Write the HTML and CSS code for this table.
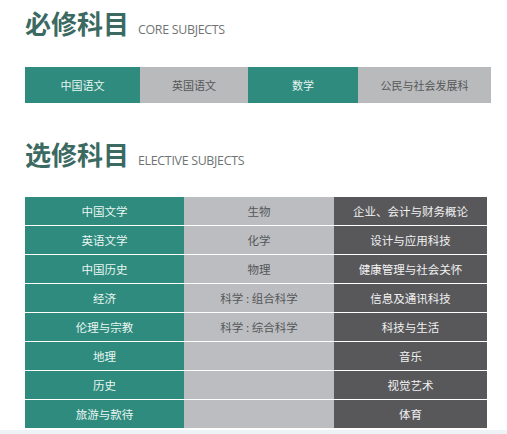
FILE: index.html
```html
<!DOCTYPE html>
<html lang="zh">
<head>
<meta charset="utf-8">
<title>科目</title>
<link rel="stylesheet" href="styles.css">
</head>
<body>
<div class="page">
  <div class="title title-core">
    <span class="zh">必修科目</span><span class="en">CORE SUBJECTS</span>
  </div>
  <div class="core-bar">
    <div class="cell teal c1">中国语文</div>
    <div class="cell gray c2">英国语文</div>
    <div class="cell teal c3">数学</div>
    <div class="cell gray c4">公民与社会发展科</div>
  </div>
  <div class="title title-elective">
    <span class="zh">选修科目</span><span class="en">ELECTIVE SUBJECTS</span>
  </div>
  <div class="grid">
    <div class="cell teal">中国文学</div><div class="cell light">生物</div><div class="cell dark">企业、会计与财务概论</div>
    <div class="cell teal">英语文学</div><div class="cell light">化学</div><div class="cell dark">设计与应用科技</div>
    <div class="cell teal">中国历史</div><div class="cell light">物理</div><div class="cell dark">健康管理与社会关怀</div>
    <div class="cell teal">经济</div><div class="cell light">科学 : 组合科学</div><div class="cell dark">信息及通讯科技</div>
    <div class="cell teal">伦理与宗教</div><div class="cell light">科学 : 综合科学</div><div class="cell dark">科技与生活</div>
    <div class="cell teal">地理</div><div class="cell light"></div><div class="cell dark">音乐</div>
    <div class="cell teal">历史</div><div class="cell light"></div><div class="cell dark">视觉艺术</div>
    <div class="cell teal">旅游与款待</div><div class="cell light"></div><div class="cell dark">体育</div>
  </div>
</div>
<div class="footer-strip"></div>
</body>
</html>
```
FILE: styles.css
```css
html, body {
  margin: 0;
  padding: 0;
  background: #ffffff;
}
body {
  font-family: "Noto Sans CJK SC", "Open Sans", sans-serif;
  width: 507px;
  height: 434px;
  overflow: hidden;
  display: flex;
  flex-direction: column;
}
.page {
  padding-left: 25px;
  display: flex;
  flex-direction: column;
}
.title {
  display: flex;
  align-items: baseline;
  gap: 9px;
  height: 30px;
}
.title-core {
  margin-top: 8px;
}
.title-elective {
  margin-top: 36px;
}
.title .zh {
  font-size: 26px;
  line-height: 30px;
  font-weight: 700;
  color: #3b6a62;
}
.title .en {
  font-family: "Open Sans", "Noto Sans", sans-serif;
  font-size: 12.4px;
  color: #6f7473;
  letter-spacing: -0.3px;
}
.core-bar {
  margin-top: 29px;
  width: 466px;
  height: 36px;
  display: grid;
  grid-template-columns: 115px 108px 110px 133px;
}
.cell {
  display: flex;
  align-items: center;
  justify-content: center;
  font-size: 11px;
  white-space: nowrap;
}
.teal {
  background: #2e8b7e;
  color: #e9f6f2;
}
.gray {
  background: #b9babc;
  color: #555758;
}
.light {
  background: #bcbdc0;
  color: #55575a;
}
.dark {
  background: #58585b;
  color: #f1f1f1;
}
.grid {
  margin-top: 28px;
  width: 462px;
  display: grid;
  grid-template-columns: 159px 150px 153px;
  grid-auto-rows: 28px;
  row-gap: 1px;
  background: #ffffff;
}
.grid .cell {
  font-size: 11.5px;
}
.footer-strip {
  margin-top: 2px;
  flex: 1;
  background: #eef3f8;
}
```
